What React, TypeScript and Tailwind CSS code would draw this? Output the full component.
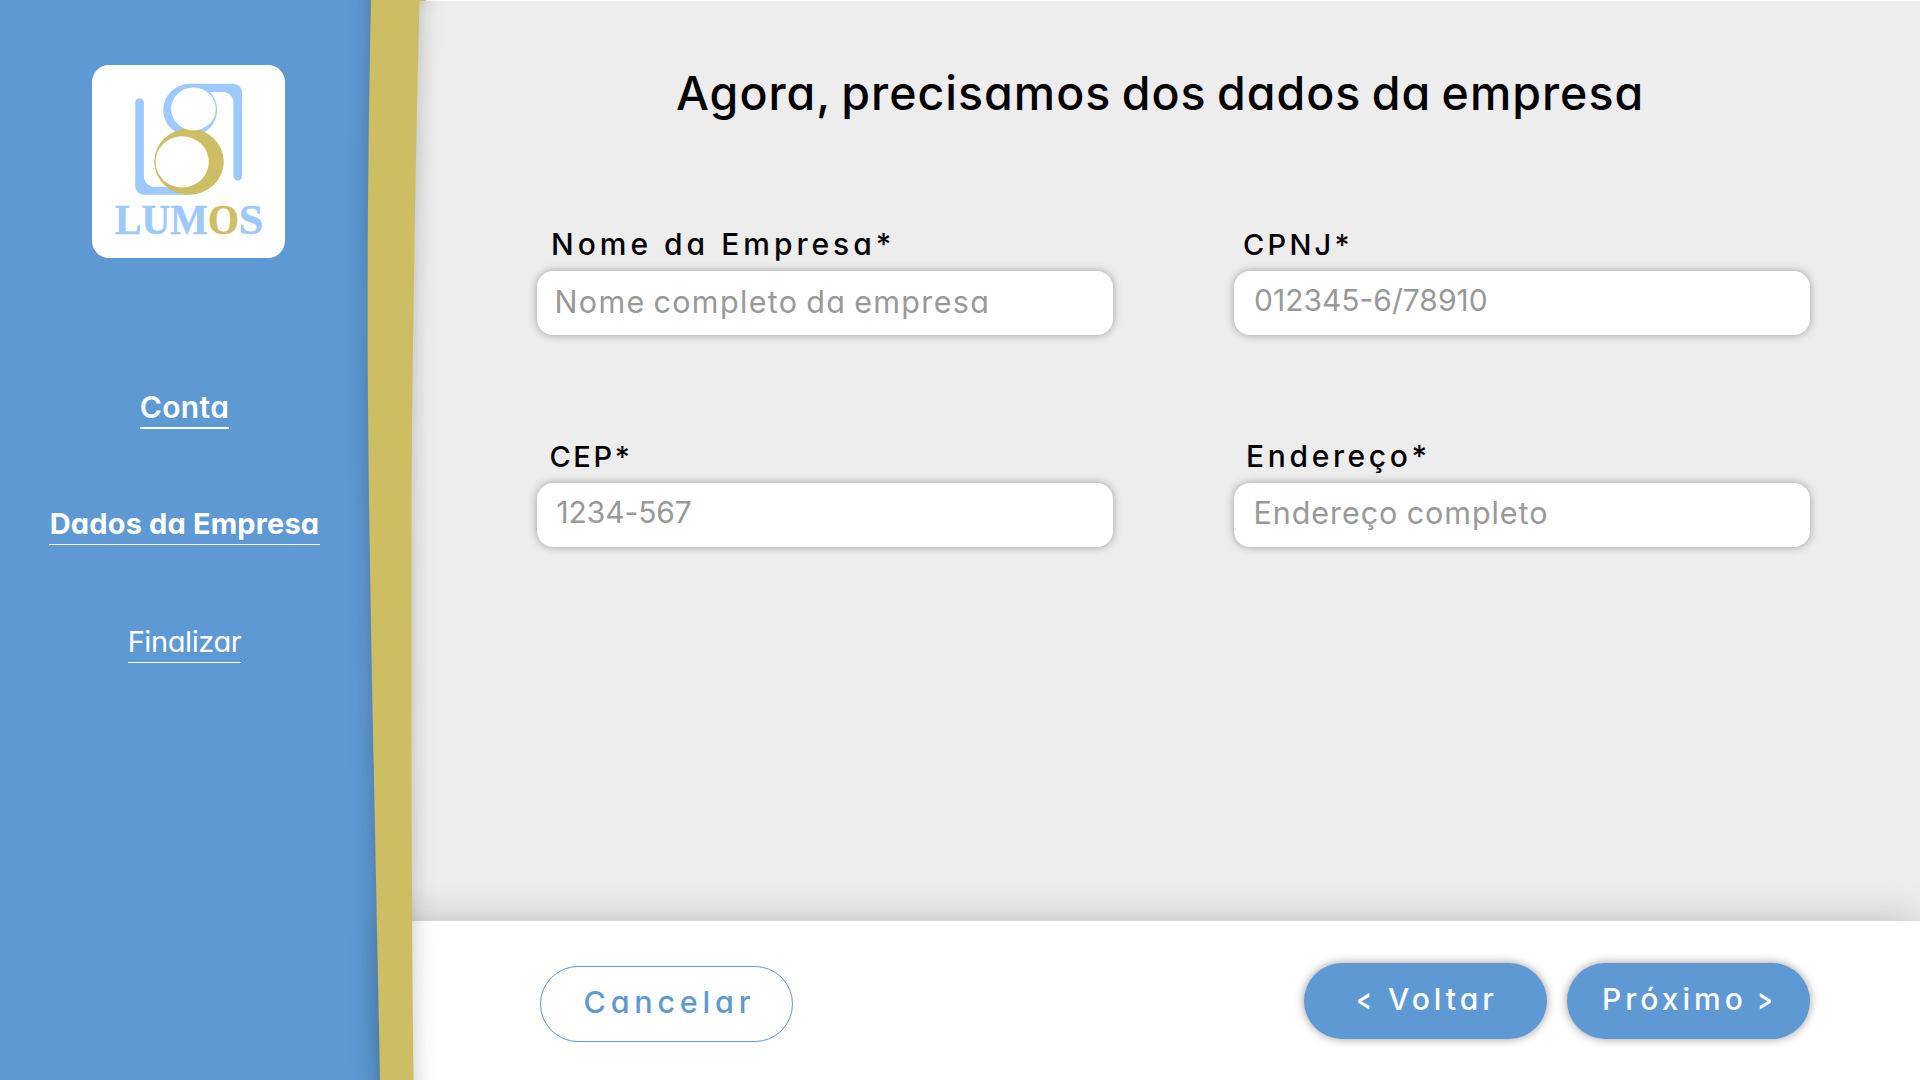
function LumosLogo() {
  return (
    <svg viewBox="34 43 580 580" className="block size-full" role="img" aria-label="Lumos">
      <g fill="#9dc9ff">
        <path d="M164 156a13 13 0 0 1 26 0V377a32 32 0 0 0 32 32H322V433H190a26 26 0 0 1-26-26Z" />
        <path d="M329 99H459a26 26 0 0 1 26 26V377a13 13 0 0 1-26 0V156a32 32 0 0 0-32-32H380Z" />
        <ellipse cx="329" cy="178" rx="81" ry="79" />
      </g>
      <ellipse cx="325.5" cy="333.5" rx="104.5" ry="99.5" fill="#cdbe63" />
      <ellipse cx="339" cy="175" rx="67" ry="64.5" fill="#fff" />
      <ellipse cx="305" cy="334" rx="80" ry="77" fill="#fff" />
      <g fontFamily="Liberation Serif, serif" fontWeight="700" fontSize="124" fill="#9dc9ff" stroke="#9dc9ff" strokeWidth="1.5">
        <text x="103" y="549.5" textLength="279" lengthAdjust="spacingAndGlyphs">LUM</text>
        <text x="383" y="549.5" textLength="93" lengthAdjust="spacingAndGlyphs" fill="#cdbe63" stroke="#cdbe63">O</text>
        <text x="475" y="549.5" textLength="74" lengthAdjust="spacingAndGlyphs">S</text>
      </g>
    </svg>
  );
}

function GoldRibbon() {
  return (
    <svg
      viewBox="0 0 480 1080"
      className="pointer-events-none absolute left-0 top-0 h-[1080px] w-[480px] overflow-hidden"
      aria-hidden="true"
    >
      <defs>
        <filter
          id="ribbon-shadow"
          filterUnits="userSpaceOnUse"
          colorInterpolationFilters="sRGB"
          x="300"
          y="-60"
          width="200"
          height="1200"
        >
          <feDropShadow dx="0" dy="0" stdDeviation="11" floodColor="#000" floodOpacity="0.23" />
        </filter>
      </defs>
      <path
        filter="url(#ribbon-shadow)"
        fill="#cdbe63"
        d="M371 -60V0C368 140 367 300 368 400C369 560 375 820 380 1080V1140H413.5V1080C412 940 411.6 820 411.5 700C411.3 560 411.7 460 412.3 400C414 260 416.5 120 419.5 1L426 1V-60Z"
      />
    </svg>
  );
}

const steps = [
  { label: "Conta", style: "text-[30px] font-semibold tracking-[0.4px] border-b-2 pb-[2px]" },
  { label: "Dados da Empresa", style: "px-[1px] text-[29px] font-bold tracking-[0.15px] border-b pb-[2px]" },
  { label: "Finalizar", style: "text-[29px] font-normal tracking-[-0.4px] border-b pb-[2px]" },
];

const fields = [
  {
    id: "nome",
    label: "Nome da Empresa*",
    placeholder: "Nome completo da empresa",
    labelStyle: "pl-[14px] text-[30px] tracking-[4px]",
    inputStyle: "pl-[17.5px] pb-[4px] text-[30.5px] tracking-[1.33px] [word-spacing:-2px]",
  },
  {
    id: "cnpj",
    label: "CPNJ*",
    placeholder: "012345-6/78910",
    labelStyle: "pl-[9px] pt-px text-[29px] tracking-[3.25px]",
    inputStyle: "pl-[20px] pb-[6px] text-[30px]",
  },
  {
    id: "cep",
    label: "CEP*",
    placeholder: "1234-567",
    labelStyle: "pl-[12.5px] pt-px text-[29px] tracking-[2.6px]",
    inputStyle: "pl-[19.5px] pb-[7px] text-[30px] tracking-[-0.1px]",
  },
  {
    id: "endereco",
    label: "Endereço*",
    placeholder: "Endereço completo",
    labelStyle: "pl-[12px] text-[30px] tracking-[3.65px]",
    inputStyle: "pl-[19.5px] pb-[5px] text-[30.5px] tracking-[0.93px] [word-spacing:-1px]",
  },
];

export default function App() {
  return (
    <div className="relative flex h-[1080px] w-[1920px] overflow-hidden bg-[#ededed] font-['Inter',sans-serif] [font-feature-settings:'cv11']">
      <aside className="flex w-[390px] shrink-0 flex-col bg-[#5e99d3] pt-[64.5px]">
        <div className="ml-[91.5px] size-[193px] overflow-hidden rounded-[17px] bg-white">
          <LumosLogo />
        </div>
        <nav className="mt-[131.5px] flex w-[369px] flex-col items-center text-white">
          {steps.map((s) => (
            <div key={s.label} className="h-[117.3px]">
              <a className={`block border-white leading-[36px] ${s.style}`}>{s.label}</a>
            </div>
          ))}
        </nav>
      </aside>

      <div className="flex flex-1 flex-col">
        <main className="flex-1 border-t border-white pt-[61.5px]">
          <h1 className="pl-[286px] text-[46.5px] font-medium leading-[60px] tracking-[1px] text-black [word-spacing:-3px]">
            Agora, precisamos dos dados da empresa
          </h1>
          <form className="ml-[147px] mt-[103.5px] grid grid-cols-[576px_576px] gap-x-[121px] gap-y-[103px]">
            {fields.map((f) => (
              <div key={f.id} className="flex h-[109px] flex-col justify-between">
                <label htmlFor={f.id} className={`h-[36px] font-medium leading-[36px] text-black ${f.labelStyle}`}>
                  {f.label}
                </label>
                <input
                  id={f.id}
                  placeholder={f.placeholder}
                  className={`h-16 w-full rounded-2xl bg-white font-normal shadow-[0_0_9px_rgba(0,0,0,0.34)] outline-none placeholder:text-[#999] ${f.inputStyle}`}
                />
              </div>
            ))}
          </form>
        </main>

        <footer className="flex h-[159px] items-start bg-white pl-[150px] pr-[110px] pt-[42px] font-medium shadow-[0_0_40px_rgba(0,0,0,0.2)]">
          <button className="mt-[2.5px] h-[76px] w-[253px] rounded-[38px] border border-[#5e99d3] pb-[3px] pl-[42.5px] text-left text-[30.5px] tracking-[4.8px] text-[#5e99d3]">
            Cancelar
          </button>
          <div className="ml-auto flex gap-[20px] text-[30px] text-white">
            <button className="flex h-[76px] w-[243px] items-center rounded-[38px] bg-[#5e99d3] pb-[3px] pl-[54px] shadow-[0_0_10px_rgba(0,0,0,0.4)]">
              <span className="flex w-[12px] scale-x-75 justify-center text-[30px] font-semibold">&lt;</span>
              <span className="ml-[18px] tracking-[4px]">Voltar</span>
            </button>
            <button className="flex h-[76px] w-[243px] items-center rounded-[38px] bg-[#5e99d3] pb-[3px] pl-[35px] shadow-[0_0_10px_rgba(0,0,0,0.4)]">
              <span className="tracking-[4px]">Próximo</span>
              <span className="ml-[12px] flex w-[12px] scale-x-75 justify-center text-[30px] font-semibold">&gt;</span>
            </button>
          </div>
        </footer>
      </div>

      <GoldRibbon />
    </div>
  );
}
